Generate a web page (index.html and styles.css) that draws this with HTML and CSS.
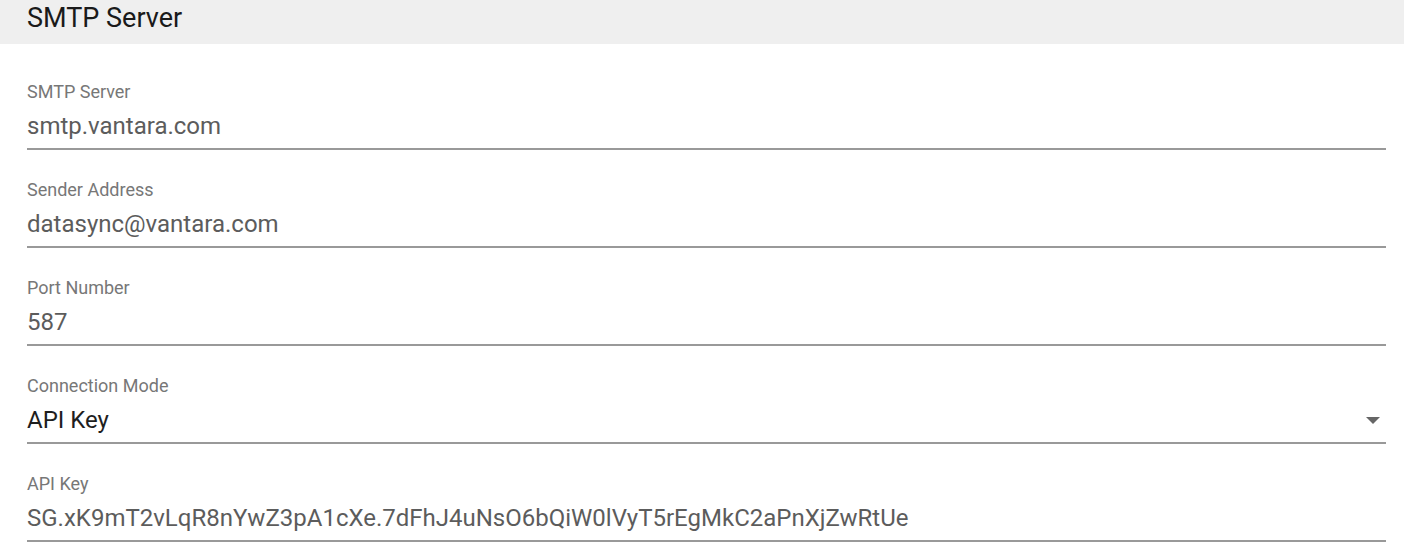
FILE: index.html
```html
<!DOCTYPE html>
<html>
<head>
<meta charset="utf-8">
<link rel="stylesheet" href="styles.css">
</head>
<body>
<div class="section-header">SMTP Server</div>
<div class="form">
  <div class="field">
    <div class="label">SMTP Server</div>
    <div class="value">smtp.vantara.com</div>
  </div>
  <div class="field">
    <div class="label">Sender Address</div>
    <div class="value">datasync@vantara.com</div>
  </div>
  <div class="field">
    <div class="label">Port Number</div>
    <div class="value">587</div>
  </div>
  <div class="field select">
    <div class="label">Connection Mode</div>
    <div class="value">
      <span>API Key</span>
      <svg class="arrow" width="14" height="7" viewBox="0 0 14 7"><path d="M0 0 L14 0 L7 7 Z" fill="#666"/></svg>
    </div>
  </div>
  <div class="field">
    <div class="label">API Key</div>
    <div class="value">SG.xK9mT2vLqR8nYwZ3pA1cXe.7dFhJ4uNsO6bQiW0lVyT5rEgMkC2aPnXjZwRtUe</div>
  </div>
</div>
</body>
</html>
```
FILE: styles.css
```css
html, body {
  margin: 0;
  padding: 0;
  background: #ffffff;
  font-family: Roboto, "Liberation Sans", sans-serif;
}
.section-header {
  height: 44px;
  line-height: 36px;
  background: #efefef;
  padding-left: 27px;
  font-size: 27px;
  color: #1a1a1a;
}
.form {
  padding: 37px 18px 0 27px;
  display: flex;
  flex-direction: column;
  gap: 29px;
}
.field {
  border-bottom: 2px solid #999999;
}
.label {
  font-size: 18px;
  line-height: 21px;
  color: #777777;
}
.value {
  margin-top: 10px;
  font-size: 24px;
  line-height: 28px;
  padding-bottom: 8px;
  color: #5c5c5c;
}
.select .value {
  color: #1e1e1e;
  display: flex;
  align-items: center;
  justify-content: space-between;
  padding-right: 6px;
}
.arrow {
  display: block;
}
```
